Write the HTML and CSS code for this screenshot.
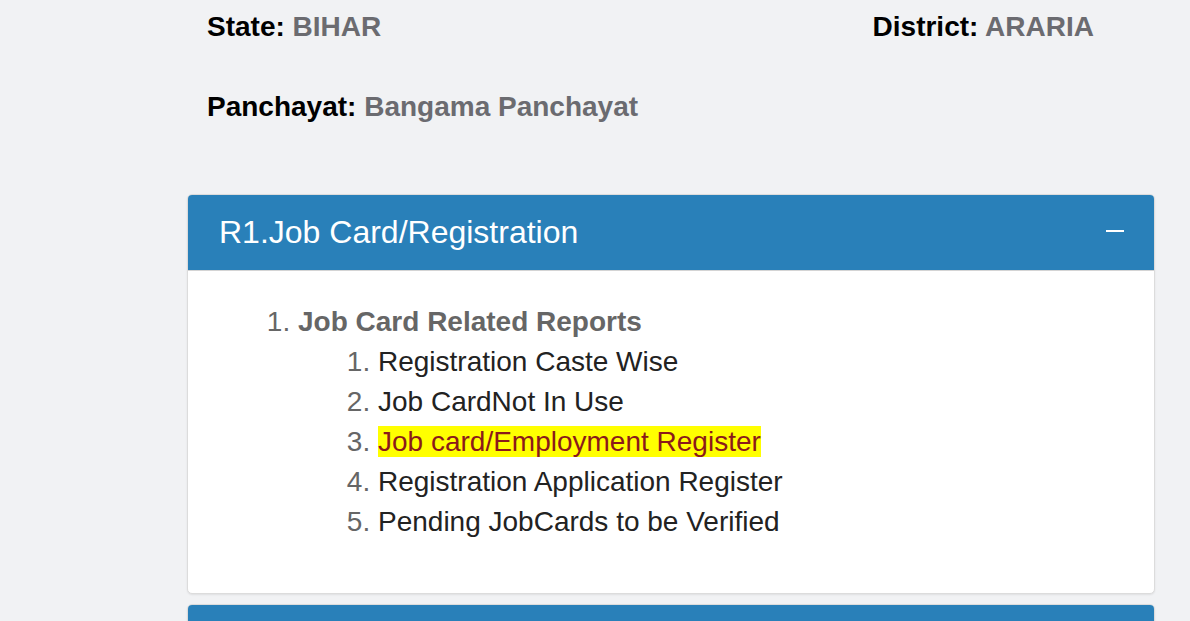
FILE: index.html
```html
<!DOCTYPE html>
<html>
<head>
<meta charset="utf-8">
<link rel="stylesheet" href="styles.css">
</head>
<body>
<div class="page">
  <div class="info">
    <div class="info-row">
      <div class="field"><span class="label">State:</span> <span class="value">BIHAR</span></div>
      <div class="field"><span class="label">District:</span> <span class="value">ARARIA</span></div>
    </div>
    <div class="info-row">
      <div class="field"><span class="label">Panchayat:</span> <span class="value">Bangama Panchayat</span></div>
    </div>
  </div>

  <div class="card">
    <div class="card-head">
      <span class="card-title">R1.Job Card/Registration</span>
      <span class="toggle"></span>
    </div>
    <div class="card-body">
      <ol class="outer">
        <li><span class="group">Job Card Related Reports</span>
          <ol class="inner">
            <li><span class="link">Registration Caste Wise</span></li>
            <li><span class="link">Job CardNot In Use</span></li>
            <li><span class="link hl">Job card/Employment Register</span></li>
            <li><span class="link">Registration Application Register</span></li>
            <li><span class="link">Pending JobCards to be Verified</span></li>
          </ol>
        </li>
      </ol>
    </div>
  </div>

  <div class="card">
    <div class="card-head"></div>
  </div>
</div>
</body>
</html>
```

FILE: styles.css
```css
html, body {
  margin: 0;
  padding: 0;
  background: #f1f2f4;
  font-family: "Liberation Sans", Arial, sans-serif;
}
.page {
  width: 968px;
  margin-left: 187px;
}
.info {
  padding: 11px 61px 0 20px;
}
.info-row {
  display: flex;
  justify-content: space-between;
  height: 80px;
}
.field {
  font-size: 28px;
  font-weight: bold;
  line-height: 32px;
}
.label { color: #000; }
.value { color: #6b6b70; }
.card {
  margin-top: 23px;
  background: #fff;
  border: 1px solid #dcdcdc;
  border-radius: 5px;
  box-shadow: 0 1px 2px rgba(0,0,0,0.08);
  overflow: hidden;
}
.card + .card { margin-top: 10px; }
.card-head {
  background: #2980b9;
  height: 75px;
  border-bottom: 1px solid #d4d4d4;
  display: flex;
  align-items: center;
  justify-content: space-between;
  padding: 0 30px 0 31px;
}
.card-title {
  color: #fff;
  font-size: 32px;
}
.toggle {
  width: 18px;
  height: 2px;
  background: #fff;
  margin-bottom: 4px;
}
.card-body {
  padding: 31px 0 51px;
}
.outer {
  margin: 0;
  padding-left: 110px;
  font-size: 28px;
  color: #666;
}
.outer > li { line-height: 40px; }
.group {
  font-weight: bold;
  color: #666;
}
.inner {
  margin: 0;
  padding-left: 80px;
  color: #666;
}
.inner li {
  line-height: 40px;
  font-weight: normal;
}
.link { color: #222; }
.hl {
  background: #ffff00;
  color: #8b1a1a;
}
```
